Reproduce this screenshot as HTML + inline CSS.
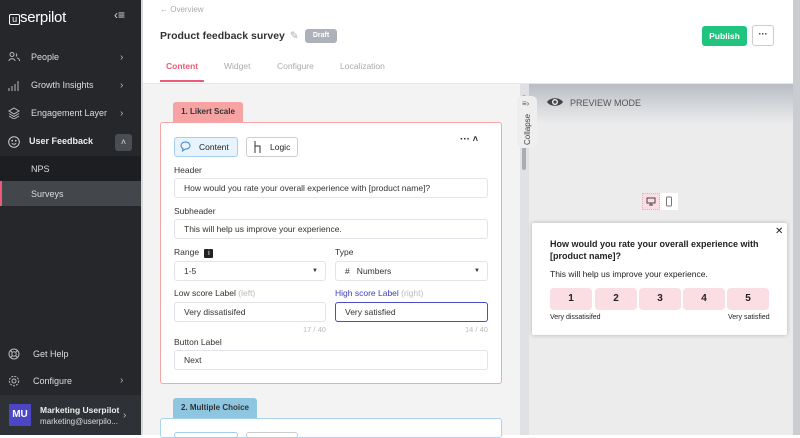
<!DOCTYPE html>
<html><head><style>
*{box-sizing:border-box;margin:0;padding:0}
body{width:800px;height:435px;overflow:hidden;font-family:"Liberation Sans",sans-serif;position:relative;background:#fff;font-size:9px;color:#222}
.a{position:absolute}
.sb{left:0;top:0;width:141px;height:435px;background:#25272b;color:#ddd}
.mi{position:absolute;left:31px;font-size:9px;color:#ddd}
.chev{position:absolute;left:120px;color:#bbb;font-size:10px}
.ic{position:absolute;left:8px;width:12px;height:12px}
.lbl{position:absolute;font-size:8.5px;color:#333}
.inp{position:absolute;background:#fff;border:1px solid #e3e3ea;border-radius:3px;font-size:8.5px;color:#333;padding-left:9px;line-height:18px}
.sc{position:absolute;top:288px;width:42px;height:22px;background:#fbdde4;border-radius:4px;font-weight:bold;font-size:10px;text-align:center;line-height:22px;color:#222}
</style></head><body>
<div class="a sb">
 <div class="a" style="left:9px;top:9px;font-size:15px;color:#fff;letter-spacing:-.3px"><span style="display:inline-block;width:11px;height:11px;border:1.5px solid #fff;border-radius:2px;font-size:9px;line-height:8px;text-align:center;vertical-align:0px">u</span>serpilot</div>
 <div class="a" style="left:114px;top:8px;color:#ddd;font-size:12px">‹≡</div>
 <svg class="ic" style="top:51px" viewBox="0 0 12 12" fill="none" stroke="#bbb"><circle cx="4" cy="3.5" r="2"/><path d="M1 10c0-3 6-3 6 0M8 2.5a2 2 0 010 3M9 7c2 0 2.5 2 2.5 3"/></svg>
 <div class="mi" style="top:52px">People</div><div class="chev" style="top:52px">›</div>
 <svg class="ic" style="top:80px" viewBox="0 0 12 12" stroke="#bbb"><path d="M1 11V8M4 11V6M7 11V4M10 11V1"/></svg>
 <div class="mi" style="top:80px">Growth Insights</div><div class="chev" style="top:80px">›</div>
 <svg class="ic" style="top:107px" viewBox="0 0 12 12" fill="none" stroke="#bbb"><path d="M6 1L11 4 6 7 1 4z M1 6.5L6 9.5 11 6.5M1 9L6 12 11 9"/></svg>
 <div class="mi" style="top:108px">Engagement Layer</div><div class="chev" style="top:108px">›</div>
 <svg class="ic" style="top:136px" viewBox="0 0 12 12" fill="none" stroke="#ccc"><circle cx="6" cy="6" r="5.3"/><path d="M3.8 7.3c1.2 1.3 3.2 1.3 4.4 0"/><circle cx="4.2" cy="4.7" r=".4"/><circle cx="7.8" cy="4.7" r=".4"/></svg>
 <div class="mi" style="top:136px;left:29px;font-weight:bold;color:#eee">User Feedback</div>
 <div class="a" style="left:115px;top:134px;width:17px;height:17px;background:#4a4d52;border-radius:3px;color:#ddd;text-align:center;font-size:9px;line-height:17px">˄</div>
 <div class="a" style="left:0;top:156px;width:141px;height:25px;background:#1d1e21"></div>
 <div class="mi" style="top:164px">NPS</div>
 <div class="a" style="left:0;top:181px;width:141px;height:25px;background:#43464b;border-left:2px solid #ef5a78"></div>
 <div class="mi" style="top:189px">Surveys</div>
 <svg class="ic" style="top:348px" viewBox="0 0 12 12" fill="none" stroke="#bbb"><circle cx="6" cy="6" r="5"/><circle cx="6" cy="6" r="2.2"/><path d="M2.5 2.5l2 2M9.5 2.5l-2 2M2.5 9.5l2-2M9.5 9.5l-2-2"/></svg>
 <div class="mi" style="top:349px;left:33px">Get Help</div>
 <svg class="ic" style="top:375px" viewBox="0 0 12 12" fill="none" stroke="#bbb"><circle cx="6" cy="6" r="2"/><circle cx="6" cy="6" r="4.7" stroke-dasharray="2 1.2"/></svg>
 <div class="mi" style="top:376px;left:33px">Configure</div><div class="chev" style="top:375px">›</div>
 <div class="a" style="left:0;top:395px;width:141px;height:40px;background:#2e3136"></div>
 <div class="a" style="left:9px;top:404px;width:22px;height:22px;background:#4b46c4;color:#fff;font-weight:bold;font-size:10px;text-align:center;line-height:22px">MU</div>
 <div class="a" style="left:40px;top:405px;font-size:8.5px;font-weight:bold;color:#eee">Marketing Userpilot</div>
 <div class="a" style="left:40px;top:417px;font-size:8px;color:#ddd">marketing@userpilo...</div>
 <div class="chev" style="top:410px;left:123px">›</div>
</div>
<div class="a" style="left:141px;top:0;width:2px;height:435px;background:#d9d9d9"></div>
<div class="a" style="left:160px;top:5px;font-size:8px;color:#aaa">← Overview</div>
<div class="a" style="left:160px;top:30px;font-size:10.5px;font-weight:bold;color:#333">Product feedback survey <span style="color:#aaa;font-weight:normal;margin-left:2px">✎</span></div>
<div class="a" style="left:305px;top:29px;width:32px;height:14px;background:#adb2ba;border-radius:3px;color:#fff;font-size:7px;font-weight:bold;text-align:center;line-height:14px">Draft</div>
<div class="a" style="left:702px;top:26px;width:45px;height:20px;background:#21c47f;border-radius:3px;color:#fff;font-size:8.5px;font-weight:bold;text-align:center;line-height:20px">Publish</div>
<div class="a" style="left:752px;top:25px;width:22px;height:21px;border:1px solid #ccc;border-radius:3px;text-align:center;line-height:16px;font-weight:bold">···</div>
<div class="a" style="left:166px;top:61px;font-size:8.5px;font-weight:bold;color:#ef5a78">Content</div>
<div class="a" style="left:224px;top:61px;font-size:8.5px;color:#aaa">Widget</div>
<div class="a" style="left:277px;top:61px;font-size:8.5px;color:#aaa">Configure</div>
<div class="a" style="left:340px;top:61px;font-size:8.5px;color:#aaa">Localization</div>
<div class="a" style="left:160px;top:80px;width:44px;height:2px;background:#ef5a78"></div>
<div class="a" style="left:143px;top:83px;width:650px;height:352px;background:#f3f3f3;border-top:1px solid #e6e6e6"></div>
<div class="a" style="left:173px;top:102px;width:70px;height:20px;background:#f7a3a3;border-radius:3px 3px 0 0;font-size:8px;font-weight:bold;text-align:center;line-height:20px;color:#333">1. Likert Scale</div>
<div class="a" style="left:160px;top:122px;width:342px;height:262px;background:#fff;border:1px solid #f6a6a6;border-radius:3px"></div>
<div class="a" style="left:174px;top:137px;width:64px;height:20px;background:#e7f3fd;border:1px solid #a6cdef;border-radius:3px;font-size:8.5px;line-height:18px;padding-left:24px">Content</div>
<svg class="a" style="left:180px;top:141px" width="11" height="11" viewBox="0 0 11 11" fill="none" stroke="#3b82d6"><path d="M5.5 1C2.8 1 1 2.7 1 4.6c0 1.3.8 2.3 2 2.9L2.5 10l2.7-1.9h.3C8.2 8.1 10 6.5 10 4.6S8.2 1 5.5 1z"/></svg>
<div class="a" style="left:246px;top:137px;width:52px;height:20px;border:1px solid #ccc;border-radius:3px;font-size:8.5px;line-height:18px;padding-left:23px">Logic</div>
<svg class="a" style="left:253px;top:141px" width="10" height="12" viewBox="0 0 10 12" fill="none" stroke="#333"><path d="M2 0v12M2 5h5v7"/></svg>
<div class="a" style="left:460px;top:134px;font-weight:bold;font-size:10px">··· <span style="font-size:9px">˄</span></div>
<div class="lbl" style="left:174px;top:165px">Header</div>
<div class="inp" style="left:174px;top:178px;width:314px;height:20px">How would you rate your overall experience with [product name]?</div>
<div class="lbl" style="left:174px;top:206px">Subheader</div>
<div class="inp" style="left:174px;top:219px;width:314px;height:20px">This will help us improve your experience.</div>
<div class="lbl" style="left:174px;top:247px">Range <span style="display:inline-block;width:9px;height:9px;background:#222;color:#fff;font-size:7px;text-align:center;line-height:9px;border-radius:1px;margin-left:3px">i</span></div>
<div class="lbl" style="left:335px;top:247px">Type</div>
<div class="inp" style="left:174px;top:261px;width:152px;height:20px">1-5<span style="position:absolute;right:7px;font-size:6px">▼</span></div>
<div class="inp" style="left:335px;top:261px;width:153px;height:20px"># &nbsp; Numbers<span style="position:absolute;right:7px;font-size:6px">▼</span></div>
<div class="lbl" style="left:174px;top:288px">Low score Label <span style="color:#bbb">(left)</span></div>
<div class="lbl" style="left:335px;top:288px;color:#3f3fc0">High score Label <span style="color:#bbb">(right)</span></div>
<div class="inp" style="left:174px;top:302px;width:152px;height:20px">Very dissatisifed</div>
<div class="inp" style="left:335px;top:302px;width:153px;height:20px;border:1px solid #4c4cc6">Very satisfied</div>
<div class="a" style="left:303px;top:325px;font-size:7.5px;color:#bbb">17 / 40</div>
<div class="a" style="left:465px;top:325px;font-size:7.5px;color:#bbb">14 / 40</div>
<div class="lbl" style="left:174px;top:337px">Button Label</div>
<div class="inp" style="left:174px;top:350px;width:314px;height:20px">Next</div>
<div class="a" style="left:173px;top:398px;width:84px;height:20px;background:#8ec6e1;border-radius:3px 3px 0 0;font-size:8px;font-weight:bold;text-align:center;line-height:20px;color:#333">2. Multiple Choice</div>
<div class="a" style="left:160px;top:418px;width:342px;height:20px;background:#fff;border:1px solid #a9d4ec;border-radius:3px"></div>
<div class="a" style="left:174px;top:432px;width:64px;height:6px;border:1px solid #a6cdef;border-radius:3px"></div>
<div class="a" style="left:246px;top:432px;width:52px;height:6px;border:1px solid #ccc;border-radius:3px"></div>
<div class="a" style="left:520px;top:84px;width:9px;height:351px;background:#dfe1e4"></div>
<div class="a" style="left:522px;top:95px;width:4px;height:75px;background:#a9adb3;border-radius:2px"></div>
<div class="a" style="left:529px;top:84px;width:264px;height:351px;background:#ececec"></div>
<div class="a" style="left:529px;top:84px;width:264px;height:40px;background:linear-gradient(#b9bdc3,#d8dadd 60%,#ececec)"></div>
<div class="a" style="left:517px;top:96px;width:20px;height:52px;background:#eee;border-radius:5px"></div>
<div class="a" style="left:522px;top:99px;font-size:8px;color:#555">≡›</div>
<div class="a" style="left:523px;top:145px;font-size:8px;color:#444;transform:rotate(-90deg);transform-origin:0 0">Collapse</div>
<svg class="a" style="left:546px;top:96px" width="18" height="12" viewBox="0 0 18 12"><path d="M1 6C4 1 14 1 17 6 14 11 4 11 1 6z" fill="#444"/><circle cx="9" cy="6" r="3" fill="#eee"/><circle cx="9" cy="6" r="1.6" fill="#444"/></svg>
<div class="a" style="left:570px;top:98px;font-size:9px;color:#555">PREVIEW MODE</div>
<div class="a" style="left:642px;top:193px;width:18px;height:17px;background:#fbdde4;border:1px dotted #f3a9b9"></div>
<div class="a" style="left:660px;top:193px;width:18px;height:17px;background:#fff"></div>
<svg class="a" style="left:646px;top:197px" width="10" height="9" viewBox="0 0 10 9" fill="none" stroke="#444"><rect x="1" y="1" width="8" height="5"/><path d="M5 6v2M3 8h4"/></svg>
<svg class="a" style="left:665px;top:196px" width="8" height="11" viewBox="0 0 8 11" fill="none" stroke="#777"><rect x="1.5" y="1" width="5" height="9" rx="1"/></svg>
<div class="a" style="left:532px;top:223px;width:255px;height:112px;background:#fff;box-shadow:0 0 4px rgba(0,0,0,.25);border-radius:2px"></div>
<div class="a" style="left:775px;top:226px;font-size:10px">✕</div>
<div class="a" style="left:550px;top:238px;width:225px;font-size:9px;font-weight:bold;line-height:12px">How would you rate your overall experience with [product name]?</div>
<div class="a" style="left:550px;top:269px;font-size:8.5px">This will help us improve your experience.</div>
<div class="sc" style="left:550px">1</div><div class="sc" style="left:595px">2</div><div class="sc" style="left:639px">3</div><div class="sc" style="left:683px">4</div><div class="sc" style="left:727px">5</div>
<div class="a" style="left:550px;top:314px;font-size:7px">Very dissatisifed</div>
<div class="a" style="left:728px;top:314px;font-size:7px">Very satisfied</div>
<div class="a" style="left:793px;top:0;width:7px;height:435px;background:#c9ccd0"></div>
</body></html>
